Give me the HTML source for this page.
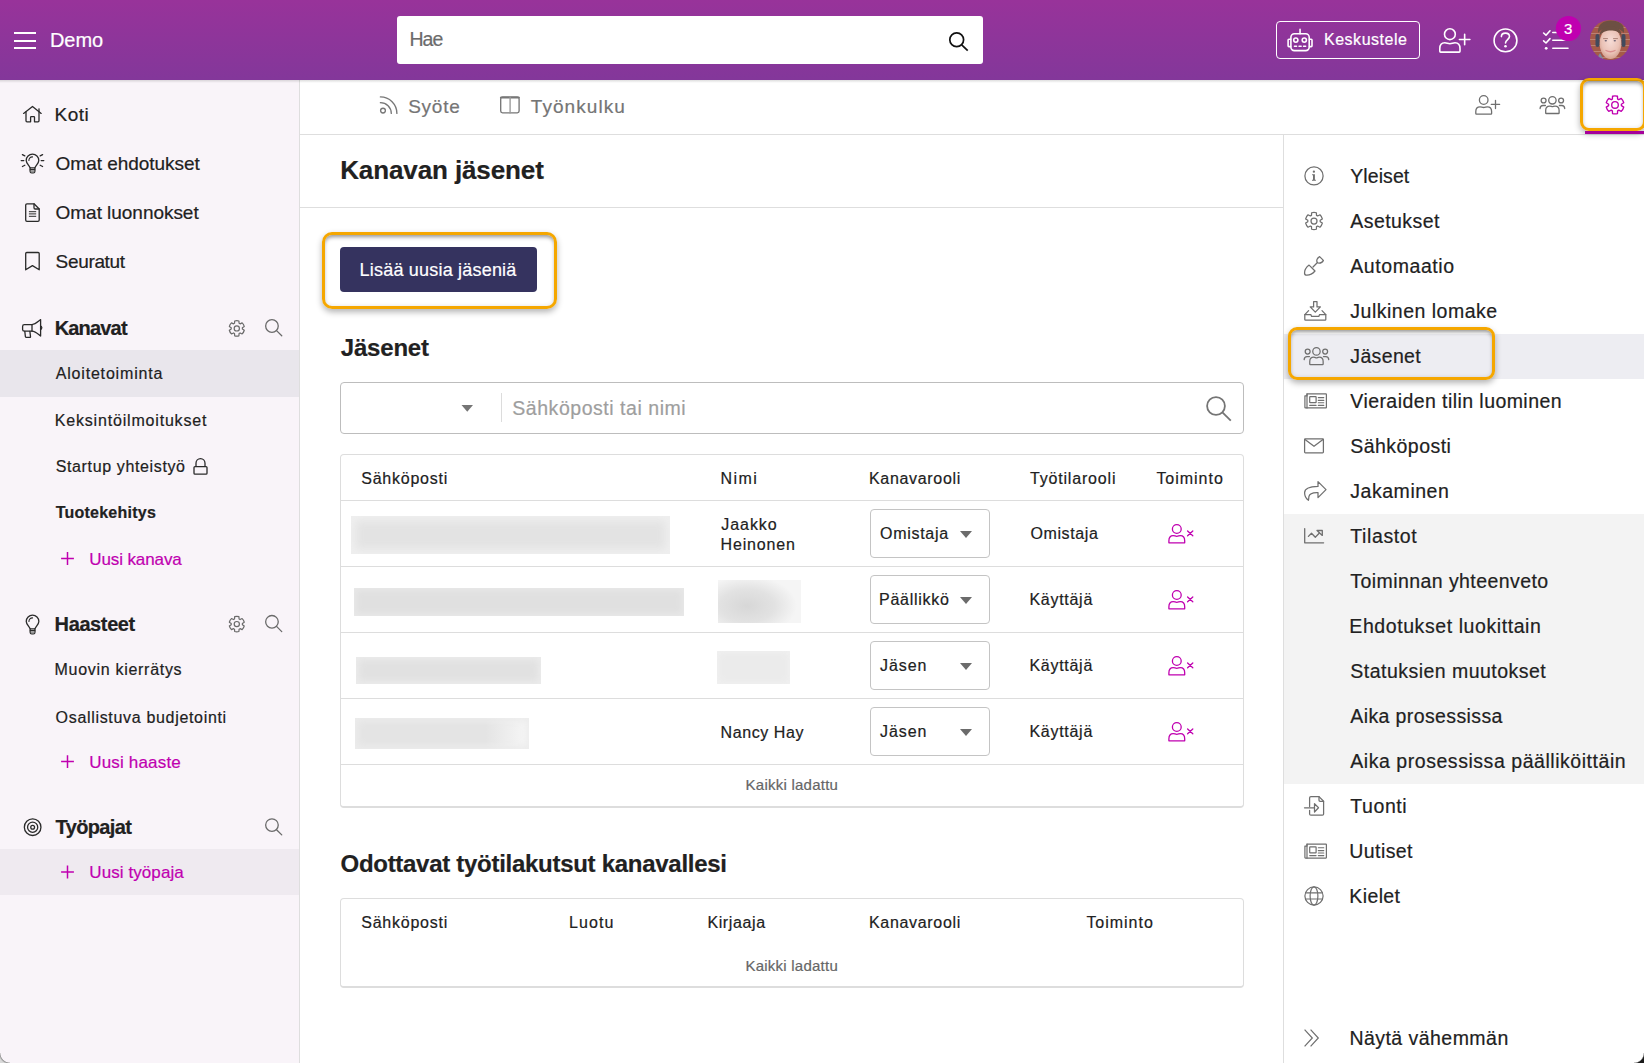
<!DOCTYPE html>
<html><head><meta charset="utf-8"><title>Kanavan jäsenet</title>
<style>
html,body{margin:0;padding:0;}
body{width:1644px;height:1063px;position:relative;overflow:hidden;background:#fff;font-family:"Liberation Sans", sans-serif;}
.t{position:absolute;line-height:1;white-space:nowrap;-webkit-text-stroke:0.2px currentColor;}
.a{position:absolute;box-sizing:border-box;}
svg.i{position:absolute;overflow:visible;}

</style></head><body>
<div class="a" style="left:0;top:0;width:1644px;height:80px;background:linear-gradient(180deg,#98339a 0%,#83379a 100%);"></div>
<!-- header -->

<div class="a" style="left:14px;top:32px;width:22px;height:2px;background:#fff"></div>
<div class="a" style="left:14px;top:39.5px;width:22px;height:2px;background:#fff"></div>
<div class="a" style="left:14px;top:47px;width:22px;height:2px;background:#fff"></div>
<div class="a" style="left:397px;top:16px;width:586px;height:48px;background:#fff;border-radius:3px"></div>
<svg class="i" style="left:0;top:0" width="1644" height="80">
  <circle cx="956.7" cy="39.8" r="6.9" fill="none" stroke="#111" stroke-width="1.7"/>
  <line x1="961.7" y1="44.8" x2="967.7" y2="50.6" stroke="#111" stroke-width="1.7"/>
</svg>
<div class="a" style="left:1276px;top:21px;width:144px;height:38px;border:1.3px solid #fff;border-radius:4px"></div>
<!-- tab bar -->
<div class="a" style="left:300px;top:134px;width:1344px;height:1px;background:#dedede"></div>
<!-- sidebar -->
<div class="a" style="left:0;top:80px;width:299px;height:983px;background:#f9f4f9"></div>
<div class="a" style="left:299px;top:80px;width:1px;height:983px;background:#dedede"></div>
<div class="a" style="left:0;top:350px;width:299px;height:47px;background:#e9e6ec"></div>
<div class="a" style="left:0;top:849px;width:299px;height:46px;background:#efeaf0"></div>
<!-- main -->
<div class="a" style="left:300px;top:207px;width:983px;height:1px;background:#dedede"></div>
<div class="a" style="left:322px;top:232px;width:235px;height:77px;border:3px solid #f5a700;border-radius:10px;box-shadow:0 3px 6px rgba(0,0,0,.3), inset 0 4px 4px -2px rgba(0,0,0,.38), inset 0 0 4px rgba(0,0,0,.12)"></div>
<div class="a" style="left:340px;top:247px;width:197px;height:45px;background:#35335f;border-radius:4px"></div>
<div class="a" style="left:340px;top:382px;width:904px;height:52px;border:1px solid #bdbdbd;border-radius:4px"></div>
<div class="a" style="left:501px;top:393px;width:1px;height:29px;background:#dcdcdc"></div>
<svg class="i" style="left:0;top:0" width="1644" height="1063">
  <path d="M461.5 405 L473 405 L467.25 411.8 Z" fill="#757575"/>
  <circle cx="1216" cy="406" r="8.9" fill="none" stroke="#757575" stroke-width="1.8"/>
  <line x1="1222.4" y1="412.4" x2="1230.8" y2="420.6" stroke="#757575" stroke-width="1.8"/>
</svg>
<div class="a" style="left:340px;top:454px;width:904px;height:354px;border:1px solid #dddddd;border-radius:4px;border-bottom-width:2px"></div>
<div class="a" style="left:341px;top:500px;width:902px;height:1px;background:#dddddd"></div>
<div class="a" style="left:341px;top:566px;width:902px;height:1px;background:#dddddd"></div>
<div class="a" style="left:341px;top:632px;width:902px;height:1px;background:#dddddd"></div>
<div class="a" style="left:341px;top:698px;width:902px;height:1px;background:#dddddd"></div>
<div class="a" style="left:341px;top:764px;width:902px;height:1px;background:#dddddd"></div>
<div class="a" style="left:340px;top:898px;width:904px;height:90px;border:1px solid #dddddd;border-radius:4px;border-bottom-width:2px"></div>
<!-- right panel -->
<div class="a" style="left:1283px;top:135px;width:1px;height:928px;background:#dedede"></div>
<div class="a" style="left:1284px;top:334px;width:360px;height:45px;background:#ededf2"></div>
<div class="a" style="left:1284px;top:514px;width:360px;height:270px;background:#f3f3f3"></div>
<!-- tab orange highlight -->
<div class="a" style="left:1580px;top:78px;width:66px;height:53px;border:3px solid #f5a700;border-radius:9px;box-shadow:0 3px 6px rgba(0,0,0,.3), inset 0 4px 4px -2px rgba(0,0,0,.38), inset 0 0 4px rgba(0,0,0,.12)"></div>
<div class="a" style="left:1585px;top:131px;width:59px;height:3px;background:#a5009a"></div>
<!-- dropdowns -->
<div class="a" style="left:870px;top:509px;width:120px;height:49px;border:1px solid #c4c4c4;border-radius:4px"></div>
<div class="a" style="left:870px;top:575px;width:120px;height:49px;border:1px solid #c4c4c4;border-radius:4px"></div>
<div class="a" style="left:870px;top:641px;width:120px;height:49px;border:1px solid #c4c4c4;border-radius:4px"></div>
<div class="a" style="left:870px;top:707px;width:120px;height:49px;border:1px solid #c4c4c4;border-radius:4px"></div>
<!-- blurred emails/names -->
<div class="a" style="left:351px;top:516px;width:319px;height:38px;background:#e3e3e3;box-shadow:inset 0 0 9px 5px #efefef"></div>
<div class="a" style="left:354px;top:588px;width:330px;height:28px;background:#e0e0e0;box-shadow:inset 0 0 6px 2px #e9e9e9"></div>
<div class="a" style="left:356px;top:657px;width:185px;height:27px;background:#e1e1e1;box-shadow:inset 0 0 7px 3px #ebebeb"></div>
<div class="a" style="left:355px;top:718px;width:174px;height:31px;background:linear-gradient(90deg,#e4e4e4 75%,#f7f7f7 100%);box-shadow:inset 0 0 7px 3px #ececec"></div>
<div class="a" style="left:718px;top:580px;width:83px;height:43px;background:radial-gradient(ellipse 60% 70% at 35% 60%,#d7d7d7 0%,#e2e2e2 55%,#f5f5f5 100%)"></div>
<div class="a" style="left:717px;top:651px;width:73px;height:33px;background:#ebebeb;box-shadow:inset 0 0 6px 2px #f0f0f0"></div>
<!-- right panel orange box -->
<div class="a" style="left:1288px;top:327px;width:207px;height:53px;border:3px solid #f5a700;border-radius:9px;box-shadow:0 3px 6px rgba(0,0,0,.3), inset 0 4px 4px -2px rgba(0,0,0,.38), inset 0 0 4px rgba(0,0,0,.12)"></div>

<div class="a" style="left:0;top:80px;width:1644px;height:3px;background:linear-gradient(180deg,rgba(0,0,0,.13),rgba(0,0,0,0))"></div>
<div class="a" style="left:1634px;top:1053px;width:10px;height:10px;background:radial-gradient(circle at 0 0,rgba(26,26,26,0) 9.2px,#1a1a1a 10.6px)"></div>
<div class="a" style="left:0;top:1053px;width:10px;height:10px;background:radial-gradient(circle at 10px 0,rgba(0,0,0,0) 9.2px,#9a9a9a 10px,#d9d9d9 11.5px)"></div>

<svg class="i" style="left:0;top:0" width="1644" height="1063" fill="none" stroke-linecap="round" stroke-linejoin="round">
<g stroke="#ffffff" stroke-width="1.6"><rect x="1290.9" y="33.8" width="18.3" height="16.8" rx="3.5"/><line x1="1300.05" y1="29.4" x2="1300.05" y2="33.8"/><path d="M1290.6 39.2 H1288.9 Q1288.1 39.2 1288.1 40 V45.8 Q1288.1 46.6 1288.9 46.6 H1290.6"/><path d="M1309.5 39.2 H1311.2 Q1312 39.2 1312 40 V45.8 Q1312 46.6 1311.2 46.6 H1309.5"/><circle cx="1295.8" cy="40.1" r="2.1"/><circle cx="1304.3" cy="40.1" r="2.1"/><path d="M1294.4 46.3 H1296.6 M1299 46.3 H1301.2 M1303.5 46.3 H1305.7" stroke-width="1.4"/></g>
<g stroke="#ffffff" stroke-width="1.6"><circle cx="1449.9" cy="34.2" r="5.4"/><path d="M1439.8 51.2 V48.6 C1439.8 45 1441.8 42.8 1444.8 42.8 C1446.8 42.8 1447.8 43.7 1449.9 43.7 C1452 43.7 1453 42.8 1455 42.8 C1458 42.8 1460 45 1460 48.6 V51.2 Q1460 52.1 1459.1 52.1 H1440.7 Q1439.8 52.1 1439.8 51.2 Z"/><path d="M1459.4 39.5 H1469.9 M1464.65 34.2 V44.8"/></g>
<g stroke="#ffffff" stroke-width="1.6"><circle cx="1505.5" cy="40.4" r="11.4"/><path d="M1501.4 36.6 C1501.4 34.3 1503.2 33.1 1505.4 33.1 C1507.8 33.1 1509.5 34.6 1509.5 36.6 C1509.5 39.2 1505.5 40 1505.5 43"/></g><circle cx="1505.5" cy="46.3" r="1.3" fill="#ffffff"/>
<g stroke="#ffffff" stroke-width="1.6"><path d="M1543.6 33 L1546 35.2 L1550 30.8"/><path d="M1543.6 40.8 L1546 43 L1550 38.6"/><path d="M1552.8 32.5 H1568 M1552.8 40.3 H1568 M1552.8 48.3 H1568"/></g><circle cx="1546.2" cy="48.3" r="1.4" fill="#ffffff"/>
<circle cx="1568.4" cy="28.5" r="12.6" fill="#c000b0"/>
<defs><clipPath id="av"><circle cx="1610" cy="40" r="20"/></clipPath><radialGradient id="face" cx="0.5" cy="0.42" r="0.62"><stop offset="0" stop-color="#f6dcd6"/><stop offset="0.65" stop-color="#eac2b6"/><stop offset="1" stop-color="#cf9a88"/></radialGradient></defs><g clip-path="url(#av)"><rect x="1590" y="20" width="40" height="40" fill="#a55a48"/><path d="M1590 27.5 H1630 M1590 33.5 H1630 M1590 39.5 H1630 M1590 45.5 H1630 M1590 51.5 H1630 M1590 57.5 H1630" stroke="#c99a8a" stroke-width="0.9" opacity="0.7"/><path d="M1598 33 C1597 24 1604 20.5 1611 20.5 C1619 20.5 1625 24 1624 33 C1622 30 1617 27.5 1611 27.5 C1604 27.5 1600 30 1598 33 Z" fill="#6d5043"/><rect x="1595.5" y="34" width="4" height="13" rx="2" fill="#424a5c"/><rect x="1621.5" y="34" width="4" height="13" rx="2" fill="#424a5c"/><ellipse cx="1610.5" cy="43.5" rx="10.8" ry="15.5" fill="url(#face)"/><path d="M1599.5 36 C1600 28 1606 26.5 1611 26.5 C1617 26.5 1621.5 29 1621.5 36 C1619 31.5 1615 30.5 1611 30.5 C1606 30.5 1602 32 1599.5 36 Z" fill="#6d5043"/><path d="M1603.5 38.6 H1607.5 M1613.5 38.6 H1617.5" stroke="#9a6f62" stroke-width="0.8"/><ellipse cx="1605.8" cy="40.8" rx="1.2" ry="0.7" fill="#6b5f70"/><ellipse cx="1614.8" cy="40.8" rx="1.2" ry="0.7" fill="#6b5f70"/><path d="M1606 50.5 Q1610.5 53 1615 50.5" stroke="#d98f8f" stroke-width="1.4"/><path d="M1596 60 L1600 53 L1604 60 Z" fill="#7d8aa0"/></g>
<g stroke="#777777" stroke-width="1.35"><circle cx="383" cy="110.6" r="2.4"/><path d="M380.4 102.7 A10.8 10.8 0 0 1 391.3 113.4"/><path d="M380.4 96.9 A16.5 16.5 0 0 1 396.9 113.4"/></g>
<g stroke="#777777" stroke-width="1.35"><rect x="500.7" y="96.9" width="18.4" height="16" rx="1.8"/><line x1="500.7" y1="97.6" x2="519.1" y2="97.6" stroke-width="1.6"/><line x1="510.1" y1="97" x2="510.1" y2="112.9" stroke="#999"/></g>
<g stroke="#6f6f6f" stroke-width="1.3"><circle cx="1483.7" cy="100" r="4.3"/><path d="M1475.8 113.6 V111.6 C1475.8 108.6 1477.5 106.8 1480 106.8 C1481.6 106.8 1482.2 107.5 1483.7 107.5 C1485.2 107.5 1485.8 106.8 1487.4 106.8 C1489.9 106.8 1491.6 108.6 1491.6 111.6 V113.6 Q1491.6 114.2 1491 114.2 H1476.4 Q1475.8 114.2 1475.8 113.6 Z"/><path d="M1491.3 104.4 H1499.6 M1495.5 100.3 V108.5"/></g>
<g stroke="#6f6f6f" stroke-width="1.3"><circle cx="1552.4" cy="100.3" r="3.7"/><circle cx="1543.6000000000001" cy="100.5" r="2.45"/><circle cx="1561.1000000000001" cy="100.5" r="2.45"/><path d="M1545.7 112.89999999999999 V110.3 C1545.7 107.6 1547.4 106.1 1549.7 106.1 C1551.1000000000001 106.1 1551.5 106.7 1552.4 106.7 C1553.3000000000002 106.7 1553.7 106.1 1555.1000000000001 106.1 C1557.4 106.1 1559.1000000000001 107.6 1559.1000000000001 110.3 V112.89999999999999 Q1559.1000000000001 113.5 1558.5 113.5 H1546.3000000000002 Q1545.7 113.5 1545.7 112.89999999999999 Z"/><path d="M1545.4 105.5 H1543.0 C1541.2 105.5 1540.2 106.89999999999999 1540.1000000000001 108.5"/><path d="M1559.4 105.5 H1561.8000000000002 C1563.6000000000001 105.5 1564.6000000000001 106.89999999999999 1564.7 108.5"/></g>
<path d="M1617.60 99.05 L1617.48 96.25 A9.0 9.0 0 0 0 1612.52 96.25 L1612.40 99.05 A6.4 6.4 0 0 0 1611.24 99.72 L1608.75 98.43 A9.0 9.0 0 0 0 1606.27 102.72 L1608.64 104.23 A6.4 6.4 0 0 0 1608.64 105.57 L1606.27 107.08 A9.0 9.0 0 0 0 1608.75 111.37 L1611.24 110.08 A6.4 6.4 0 0 0 1612.40 110.75 L1612.52 113.55 A9.0 9.0 0 0 0 1617.48 113.55 L1617.60 110.75 A6.4 6.4 0 0 0 1618.76 110.08 L1621.25 111.37 A9.0 9.0 0 0 0 1623.73 107.08 L1621.36 105.57 A6.4 6.4 0 0 0 1621.36 104.23 L1623.73 102.72 A9.0 9.0 0 0 0 1621.25 98.43 L1618.76 99.72 A6.4 6.4 0 0 0 1617.60 99.05 Z" stroke="#c000b0" stroke-width="1.35"/>
<circle cx="1615" cy="104.9" r="3.3" stroke="#c000b0" stroke-width="1.35"/>
<g stroke="#2a2a2a" stroke-width="1.3"><path d="M23.6 113.4 L32.5 106.4 L41.2 113.4"/><path d="M39 108.8 V111.3"/><path d="M26 111.8 V120.8 Q26 121.8 27 121.8 H30.6 V117.3 Q30.6 116.6 31.3 116.6 H33.8 Q34.5 116.6 34.5 117.3 V121.8 H38 Q39 121.8 39 120.8 V111.8"/></g>
<g stroke="#2a2a2a" stroke-width="1.3"><path d="M30.1 167.9 C29.5 165.8 26.2 163.3 26.2 160.5 A6.2 6.2 0 0 1 38.8 160.5 C38.8 163.3 35.5 165.8 34.9 167.9 Z"/><path d="M30.1 167.9 V171.3 Q30.1 172.9 31.7 172.9 H33.3 Q34.9 172.9 34.9 171.3 V167.9"/><line x1="30.3" y1="169.70000000000002" x2="34.7" y2="169.70000000000002"/><rect x="30.8" y="170.20000000000002" width="3.4" height="2.2" fill="#999" stroke="none"/><path d="M28.9 160.5 A3.4 3.4 0 0 1 32.5 156.9" stroke-width="1.1"/><path d="M22.4 154.60000000000002 L24.8 155.9 M21.2 160.60000000000002 H23.8 M22.4 166.5 L24.8 165.20000000000002 M42.6 154.60000000000002 L40.2 155.9 M43.8 160.60000000000002 H41.2 M42.6 166.5 L40.2 165.20000000000002"/></g>
<g stroke="#2a2a2a" stroke-width="1.3"><path d="M30.15 628.9 C29.549999999999997 626.8 26.249999999999996 624.3 26.249999999999996 621.5 A6.2 6.2 0 0 1 38.849999999999994 621.5 C38.849999999999994 624.3 35.55 626.8 34.949999999999996 628.9 Z"/><path d="M30.15 628.9 V632.3 Q30.15 633.9 31.749999999999996 633.9 H33.349999999999994 Q34.949999999999996 633.9 34.949999999999996 632.3 V628.9"/><line x1="30.349999999999998" y1="630.6999999999999" x2="34.75" y2="630.6999999999999"/><rect x="30.849999999999998" y="631.1999999999999" width="3.4" height="2.2" fill="#999" stroke="none"/><path d="M28.949999999999996 621.5 A3.4 3.4 0 0 1 32.55 617.9" stroke-width="1.1"/></g>
<g stroke="#2a2a2a" stroke-width="1.3"><path d="M34 203.8 H27 Q25.7 203.8 25.7 205.1 V220 Q25.7 221.3 27 221.3 H37.9 Q39.2 221.3 39.2 220 V209 L34 203.8 Z"/><path d="M34 203.8 V207.8 Q34 209 35.2 209 H39.2"/><path d="M29.3 211.7 H35.8 M29.3 213.9 H35.8 M29.3 216.3 H35.8" stroke-width="1"/></g>
<path d="M25.7 269.8 V253.6 Q25.7 252.5 26.8 252.5 H38.1 Q39.2 252.5 39.2 253.6 V269.8 L32.45 265.6 Z" stroke="#2a2a2a" stroke-width="1.3"/>
<g stroke="#2a2a2a" stroke-width="1.3"><path d="M32 324.6 H24.4 Q22.6 324.6 22.6 326.4 V329.4 Q22.6 331.2 24.4 331.2 H32 Z"/><path d="M32 324.6 C35.5 324.4 37.5 322 40.6 319.6 V336 C37.5 333.6 35.5 331.4 32 331.2"/><path d="M24.8 331.4 L25.4 336.6 Q25.6 337.4 26.4 337.4 H29.8 Q30.6 337.4 30.5 336.6 L29.9 331.4"/><path d="M41.3 326.4 Q42.4 327.7 41.3 329"/></g>
<path d="M239.08 323.28 L238.92 321.00 A7.7 7.7 0 0 0 234.68 321.00 L234.52 323.28 A5.6 5.6 0 0 0 233.51 323.87 L231.45 322.86 A7.7 7.7 0 0 0 229.33 326.54 L231.23 327.81 A5.6 5.6 0 0 0 231.23 328.99 L229.33 330.26 A7.7 7.7 0 0 0 231.45 333.94 L233.51 332.93 A5.6 5.6 0 0 0 234.52 333.52 L234.68 335.80 A7.7 7.7 0 0 0 238.92 335.80 L239.08 333.52 A5.6 5.6 0 0 0 240.09 332.93 L242.15 333.94 A7.7 7.7 0 0 0 244.27 330.26 L242.37 328.99 A5.6 5.6 0 0 0 242.37 327.81 L244.27 326.54 A7.7 7.7 0 0 0 242.15 322.86 L240.09 323.87 A5.6 5.6 0 0 0 239.08 323.28 Z" stroke="#6a6a6a" stroke-width="1.2"/>
<circle cx="236.8" cy="328.4" r="2.6" stroke="#6a6a6a" stroke-width="1.2"/>
<path d="M239.08 618.98 L238.92 616.70 A7.7 7.7 0 0 0 234.68 616.70 L234.52 618.98 A5.6 5.6 0 0 0 233.51 619.57 L231.45 618.56 A7.7 7.7 0 0 0 229.33 622.24 L231.23 623.51 A5.6 5.6 0 0 0 231.23 624.69 L229.33 625.96 A7.7 7.7 0 0 0 231.45 629.64 L233.51 628.63 A5.6 5.6 0 0 0 234.52 629.22 L234.68 631.50 A7.7 7.7 0 0 0 238.92 631.50 L239.08 629.22 A5.6 5.6 0 0 0 240.09 628.63 L242.15 629.64 A7.7 7.7 0 0 0 244.27 625.96 L242.37 624.69 A5.6 5.6 0 0 0 242.37 623.51 L244.27 622.24 A7.7 7.7 0 0 0 242.15 618.56 L240.09 619.57 A5.6 5.6 0 0 0 239.08 618.98 Z" stroke="#6a6a6a" stroke-width="1.2"/>
<circle cx="236.8" cy="624.1" r="2.6" stroke="#6a6a6a" stroke-width="1.2"/>
<circle cx="271.95" cy="326" r="6.3" stroke="#6a6a6a" stroke-width="1.3"/>
<line x1="276.55" y1="330.6" x2="281.75" y2="335.8" stroke="#6a6a6a" stroke-width="1.3"/>
<circle cx="271.95" cy="621.8" r="6.3" stroke="#6a6a6a" stroke-width="1.3"/>
<line x1="276.55" y1="626.4" x2="281.75" y2="631.5999999999999" stroke="#6a6a6a" stroke-width="1.3"/>
<circle cx="271.95" cy="825.1" r="6.3" stroke="#6a6a6a" stroke-width="1.3"/>
<line x1="276.55" y1="829.7" x2="281.75" y2="834.9" stroke="#6a6a6a" stroke-width="1.3"/>
<g stroke="#2a2a2a" stroke-width="1.3"><path d="M196 466 V463.2 A4.5 4.5 0 0 1 205 463.2 V466"/><rect x="194" y="466.6" width="13" height="7.6" rx="1"/></g>
<path d="M61.1 558.5 H73.9 M67.5 552.1 V564.9" stroke="#c000b0" stroke-width="1.5" stroke-linecap="butt"/>
<path d="M61.1 761.6 H73.9 M67.5 755.2 V768.0" stroke="#c000b0" stroke-width="1.5" stroke-linecap="butt"/>
<path d="M61.1 872.0 H73.9 M67.5 865.6 V878.4" stroke="#c000b0" stroke-width="1.5" stroke-linecap="butt"/>
<g stroke="#2a2a2a" stroke-width="1.3"><circle cx="32.65" cy="827.2" r="8.3"/><circle cx="32.65" cy="827.2" r="5.1"/><circle cx="32.65" cy="827.2" r="1.9"/></g>
<g stroke="#c000b0" stroke-width="1.3"><circle cx="1176.8" cy="529" r="4.4"/><path d="M1168.9 542.8 V540.8 C1168.9 537.8 1170.5 535.6 1173.2 535.6 C1174.7 535.6 1175.3 536.3 1176.8 536.3 C1178.3 536.3 1178.9 535.6 1180.4 535.6 C1183.1 535.6 1184.7 537.8 1184.7 540.8 V542.8 Z"/><path d="M1187.6 530.9 L1192.8 535.7 M1192.8 530.9 L1187.6 535.7"/></g>
<path d="M960 531 H972 L966 538 Z" fill="#6b6b6b"/>
<g stroke="#c000b0" stroke-width="1.3"><circle cx="1176.8" cy="595" r="4.4"/><path d="M1168.9 608.8 V606.8 C1168.9 603.8 1170.5 601.6 1173.2 601.6 C1174.7 601.6 1175.3 602.3 1176.8 602.3 C1178.3 602.3 1178.9 601.6 1180.4 601.6 C1183.1 601.6 1184.7 603.8 1184.7 606.8 V608.8 Z"/><path d="M1187.6 596.9 L1192.8 601.7 M1192.8 596.9 L1187.6 601.7"/></g>
<path d="M960 597 H972 L966 604 Z" fill="#6b6b6b"/>
<g stroke="#c000b0" stroke-width="1.3"><circle cx="1176.8" cy="661" r="4.4"/><path d="M1168.9 674.8 V672.8 C1168.9 669.8 1170.5 667.6 1173.2 667.6 C1174.7 667.6 1175.3 668.3 1176.8 668.3 C1178.3 668.3 1178.9 667.6 1180.4 667.6 C1183.1 667.6 1184.7 669.8 1184.7 672.8 V674.8 Z"/><path d="M1187.6 662.9 L1192.8 667.7 M1192.8 662.9 L1187.6 667.7"/></g>
<path d="M960 663 H972 L966 670 Z" fill="#6b6b6b"/>
<g stroke="#c000b0" stroke-width="1.3"><circle cx="1176.8" cy="727" r="4.4"/><path d="M1168.9 740.8 V738.8 C1168.9 735.8 1170.5 733.6 1173.2 733.6 C1174.7 733.6 1175.3 734.3 1176.8 734.3 C1178.3 734.3 1178.9 733.6 1180.4 733.6 C1183.1 733.6 1184.7 735.8 1184.7 738.8 V740.8 Z"/><path d="M1187.6 728.9 L1192.8 733.7 M1192.8 728.9 L1187.6 733.7"/></g>
<path d="M960 729 H972 L966 736 Z" fill="#6b6b6b"/>
<g stroke="#6f6f6f" stroke-width="1.25"><circle cx="1314" cy="175.9" r="9.1"/></g><g fill="#6f6f6f"><circle cx="1313.9" cy="171.7" r="1.15"/><path d="M1312.1 174.2 H1314.9 V179.8 H1315.9 V180.8 H1312 V179.8 H1313 V175.2 H1312.1 Z"/></g>
<path d="M1316.52 215.34 L1316.37 212.73 A8.6 8.6 0 0 0 1311.63 212.73 L1311.48 215.34 A6.2 6.2 0 0 0 1310.36 215.98 L1308.03 214.81 A8.6 8.6 0 0 0 1305.66 218.92 L1307.83 220.35 A6.2 6.2 0 0 0 1307.83 221.65 L1305.66 223.08 A8.6 8.6 0 0 0 1308.03 227.19 L1310.36 226.02 A6.2 6.2 0 0 0 1311.48 226.66 L1311.63 229.27 A8.6 8.6 0 0 0 1316.37 229.27 L1316.52 226.66 A6.2 6.2 0 0 0 1317.64 226.02 L1319.97 227.19 A8.6 8.6 0 0 0 1322.34 223.08 L1320.17 221.65 A6.2 6.2 0 0 0 1320.17 220.35 L1322.34 218.92 A8.6 8.6 0 0 0 1319.97 214.81 L1317.64 215.98 A6.2 6.2 0 0 0 1316.52 215.34 Z" stroke="#6f6f6f" stroke-width="1.25"/>
<circle cx="1314" cy="221" r="3" stroke="#6f6f6f" stroke-width="1.25"/>
<g stroke="#6f6f6f" stroke-width="1.25"><path d="M1319.6 256.6 L1323.4 260.4 Q1322 263.2 1319.2 263.2 Q1316.5 263 1316.8 260 Q1317.2 258 1319.6 256.6 Z"/><line x1="1317.2" y1="262.8" x2="1313" y2="267"/><path d="M1309.1 265.1 L1315 271 Q1311 275.6 1306 275.1 Q1304.3 274.8 1304.6 272.2 Q1304.8 268.5 1309.1 265.1 Z"/></g>
<g stroke="#6f6f6f" stroke-width="1.25"><path d="M1313.6 301.7 H1317 V306.9 H1320.4 L1315.3 312.1 L1310.2 306.9 H1313.6 Z"/><path d="M1308.6 310.6 L1304.8 314.6 V319.4 Q1304.8 320.2 1305.6 320.2 H1325 Q1325.8 320.2 1325.8 319.4 V314.6 L1322 310.6"/><path d="M1304.8 314.6 H1310.8 L1311.6 316.4 H1318.8 L1319.6 314.6 H1325.8"/></g>
<g stroke="#6f6f6f" stroke-width="1.25"><circle cx="1316.45" cy="351.4" r="3.7"/><circle cx="1307.65" cy="351.59999999999997" r="2.45"/><circle cx="1325.15" cy="351.59999999999997" r="2.45"/><path d="M1309.75 364.0 V361.4 C1309.75 358.7 1311.45 357.2 1313.75 357.2 C1315.15 357.2 1315.55 357.79999999999995 1316.45 357.79999999999995 C1317.3500000000001 357.79999999999995 1317.75 357.2 1319.15 357.2 C1321.45 357.2 1323.15 358.7 1323.15 361.4 V364.0 Q1323.15 364.59999999999997 1322.55 364.59999999999997 H1310.3500000000001 Q1309.75 364.59999999999997 1309.75 364.0 Z"/><path d="M1309.45 356.59999999999997 H1307.05 C1305.25 356.59999999999997 1304.25 358.0 1304.15 359.59999999999997"/><path d="M1323.45 356.59999999999997 H1325.8500000000001 C1327.65 356.59999999999997 1328.65 358.0 1328.75 359.59999999999997"/></g>
<g stroke="#6f6f6f" stroke-width="1.2"><path d="M1307.0 393.90000000000003 H1325.8999999999999 Q1326.3999999999999 393.90000000000003 1326.3999999999999 394.40000000000003 V407.40000000000003 Q1326.3999999999999 407.90000000000003 1325.8999999999999 407.90000000000003 H1305.3999999999999 Q1304.8999999999999 407.90000000000003 1304.8999999999999 407.40000000000003 V395.90000000000003 H1307.0 Z"/><path d="M1307.0 393.90000000000003 V407.90000000000003"/><rect x="1309.7" y="396.7" width="6.4" height="6" rx="0.4"/><path d="M1318.3 397.6 H1323.8 M1318.3 400.40000000000003 H1323.8 M1318.3 402.8 H1323.8 M1309.7 405.40000000000003 H1316.1 M1318.3 405.40000000000003 H1323.8" stroke-width="1.1"/></g>
<g stroke="#6f6f6f" stroke-width="1.2"><path d="M1307.0 844.1 H1325.8999999999999 Q1326.3999999999999 844.1 1326.3999999999999 844.6 V857.6 Q1326.3999999999999 858.1 1325.8999999999999 858.1 H1305.3999999999999 Q1304.8999999999999 858.1 1304.8999999999999 857.6 V846.1 H1307.0 Z"/><path d="M1307.0 844.1 V858.1"/><rect x="1309.7" y="846.9" width="6.4" height="6" rx="0.4"/><path d="M1318.3 847.8 H1323.8 M1318.3 850.6 H1323.8 M1318.3 853.0 H1323.8 M1309.7 855.6 H1316.1 M1318.3 855.6 H1323.8" stroke-width="1.1"/></g>
<g stroke="#6f6f6f" stroke-width="1.25"><rect x="1304.6" y="438.9" width="18.8" height="14" rx="0.8"/><path d="M1305 439.5 L1314 446.3 L1323 439.5"/></g>
<path d="M1318 481.6 L1326 489.6 L1318 497.6 V492.6 C1313 492.4 1309.4 493.6 1308.9 496.6 C1308.7 498 1308.8 499.3 1308.4 500.3 C1305.8 498.4 1304.6 495.3 1304.6 492.8 C1304.6 488.6 1308.6 486.6 1318 486.4 Z" stroke="#6f6f6f" stroke-width="1.25"/>
<g stroke="#6f6f6f" stroke-width="1.3"><path d="M1304.7 528.6 V542.8 H1323.6"/><path d="M1308.4 536.4 L1311.5 533.2 L1315.3 537.2 L1319.4 533"/><path d="M1317 530.5 H1322.3 V535.4 Z"/></g>
<g stroke="#6f6f6f" stroke-width="1.25"><path d="M1309.6 806.6 V797.9 Q1309.6 796.6 1310.9 796.6 H1319 L1323.6 801.3 V814 Q1323.6 815.2 1322.4 815.2 H1310.9 Q1309.6 815.2 1309.6 814 V810.3"/><path d="M1319 796.6 V800.2 Q1319 801.3 1320.1 801.3 H1323.6"/><path d="M1304.5 807.8 H1314.2"/><path d="M1314.5 803.6 L1318.5 807.8 L1314.5 812 Z"/></g>
<g stroke="#6f6f6f" stroke-width="1.2"><circle cx="1314" cy="896" r="9.1"/><ellipse cx="1314" cy="896" rx="3.9" ry="9.1"/><path d="M1305.6 892.8 H1322.4 M1305.6 899 H1322.4"/></g>
<path d="M1304.6 1029.6 L1312.3 1038 L1304.6 1046.4 M1310.6 1029.6 L1318.3 1038 L1310.6 1046.4" stroke="#6f6f6f" stroke-width="1.2" stroke-linecap="butt" stroke-linejoin="miter"/>
</svg>
<div class="t" style="left:50.00px;top:29.90px;font-size:20px;color:#ffffff;letter-spacing:-0.076px;">Demo</div>
<div class="t" style="left:409.40px;top:30.00px;font-size:19.5px;color:#6b6b6b;letter-spacing:-0.964px;">Hae</div>
<div class="t" style="left:1324.00px;top:31.70px;font-size:16px;color:#ffffff;letter-spacing:0.515px;">Keskustele</div>
<div class="t" style="left:1564.00px;top:21.00px;font-size:15px;color:#ffffff;">3</div>
<div class="t" style="left:408.20px;top:96.60px;font-size:19px;color:#757575;letter-spacing:0.745px;">Syöte</div>
<div class="t" style="left:530.80px;top:96.60px;font-size:19px;color:#757575;letter-spacing:1.065px;">Työnkulku</div>
<div class="t" style="left:54.60px;top:105.10px;font-size:19px;color:#212121;letter-spacing:0.494px;">Koti</div>
<div class="t" style="left:55.60px;top:153.80px;font-size:19px;color:#212121;letter-spacing:-0.029px;">Omat ehdotukset</div>
<div class="t" style="left:55.60px;top:202.90px;font-size:19px;color:#212121;letter-spacing:-0.040px;">Omat luonnokset</div>
<div class="t" style="left:55.60px;top:251.80px;font-size:19px;color:#212121;letter-spacing:-0.335px;">Seuratut</div>
<div class="t" style="left:54.70px;top:318.00px;font-size:20px;color:#212121;font-weight:700;letter-spacing:-0.825px;">Kanavat</div>
<div class="t" style="left:55.70px;top:365.70px;font-size:16px;color:#212121;letter-spacing:0.819px;">Aloitetoiminta</div>
<div class="t" style="left:54.70px;top:413.00px;font-size:16px;color:#212121;letter-spacing:0.822px;">Keksintöilmoitukset</div>
<div class="t" style="left:55.70px;top:459.00px;font-size:16px;color:#212121;letter-spacing:0.633px;">Startup yhteistyö</div>
<div class="t" style="left:55.70px;top:504.70px;font-size:16px;color:#212121;font-weight:700;letter-spacing:0.236px;">Tuotekehitys</div>
<div class="t" style="left:89.30px;top:551.00px;font-size:17px;color:#c000b0;letter-spacing:-0.110px;">Uusi kanava</div>
<div class="t" style="left:54.60px;top:614.00px;font-size:20px;color:#212121;font-weight:700;letter-spacing:-0.388px;">Haasteet</div>
<div class="t" style="left:54.60px;top:662.40px;font-size:16px;color:#212121;letter-spacing:0.702px;">Muovin kierrätys</div>
<div class="t" style="left:55.60px;top:709.60px;font-size:16px;color:#212121;letter-spacing:0.678px;">Osallistuva budjetointi</div>
<div class="t" style="left:89.30px;top:754.00px;font-size:17px;color:#c000b0;letter-spacing:0.168px;">Uusi haaste</div>
<div class="t" style="left:55.60px;top:816.90px;font-size:20px;color:#212121;font-weight:700;letter-spacing:-0.642px;">Työpajat</div>
<div class="t" style="left:89.30px;top:864.40px;font-size:17px;color:#c000b0;letter-spacing:0.082px;">Uusi työpaja</div>
<div class="t" style="left:340.20px;top:157.30px;font-size:26px;color:#212121;font-weight:700;letter-spacing:-0.111px;">Kanavan jäsenet</div>
<div class="t" style="left:359.60px;top:260.60px;font-size:18px;color:#ffffff;letter-spacing:0.200px;">Lisää uusia jäseniä</div>
<div class="t" style="left:340.80px;top:336.00px;font-size:24px;color:#212121;font-weight:700;letter-spacing:-0.200px;">Jäsenet</div>
<div class="t" style="left:512.30px;top:398.50px;font-size:19.5px;color:#9e9e9e;letter-spacing:0.537px;">Sähköposti tai nimi</div>
<div class="t" style="left:361.20px;top:471.00px;font-size:16px;color:#212121;letter-spacing:0.766px;">Sähköposti</div>
<div class="t" style="left:720.50px;top:471.00px;font-size:16px;color:#212121;letter-spacing:1.421px;">Nimi</div>
<div class="t" style="left:869.00px;top:471.00px;font-size:16px;color:#212121;letter-spacing:0.675px;">Kanavarooli</div>
<div class="t" style="left:1030.00px;top:471.00px;font-size:16px;color:#212121;letter-spacing:0.816px;">Työtilarooli</div>
<div class="t" style="left:1156.40px;top:471.00px;font-size:16px;color:#212121;letter-spacing:0.974px;">Toiminto</div>
<div class="t" style="left:721.30px;top:516.50px;font-size:16px;color:#212121;letter-spacing:0.941px;">Jaakko</div>
<div class="t" style="left:720.50px;top:536.50px;font-size:16px;color:#212121;letter-spacing:0.843px;">Heinonen</div>
<div class="t" style="left:720.60px;top:725.00px;font-size:16px;color:#212121;letter-spacing:0.569px;">Nancy Hay</div>
<div class="t" style="left:880.00px;top:526.30px;font-size:16px;color:#212121;letter-spacing:0.710px;">Omistaja</div>
<div class="t" style="left:1030.40px;top:526.40px;font-size:16px;color:#212121;letter-spacing:0.610px;">Omistaja</div>
<div class="t" style="left:879.00px;top:592.30px;font-size:16px;color:#212121;letter-spacing:0.733px;">Päällikkö</div>
<div class="t" style="left:1029.40px;top:592.40px;font-size:16px;color:#212121;letter-spacing:0.727px;">Käyttäjä</div>
<div class="t" style="left:880.00px;top:658.30px;font-size:16px;color:#212121;letter-spacing:0.926px;">Jäsen</div>
<div class="t" style="left:1029.40px;top:658.40px;font-size:16px;color:#212121;letter-spacing:0.727px;">Käyttäjä</div>
<div class="t" style="left:880.00px;top:724.30px;font-size:16px;color:#212121;letter-spacing:0.926px;">Jäsen</div>
<div class="t" style="left:1029.40px;top:724.40px;font-size:16px;color:#212121;letter-spacing:0.727px;">Käyttäjä</div>
<div class="t" style="left:745.60px;top:777.00px;font-size:15px;color:#666666;letter-spacing:0.240px;">Kaikki ladattu</div>
<div class="t" style="left:340.50px;top:852.00px;font-size:24px;color:#212121;font-weight:700;letter-spacing:-0.284px;">Odottavat työtilakutsut kanavallesi</div>
<div class="t" style="left:361.20px;top:915.20px;font-size:16px;color:#212121;letter-spacing:0.766px;">Sähköposti</div>
<div class="t" style="left:569.10px;top:915.20px;font-size:16px;color:#212121;letter-spacing:1.065px;">Luotu</div>
<div class="t" style="left:707.40px;top:915.20px;font-size:16px;color:#212121;letter-spacing:0.620px;">Kirjaaja</div>
<div class="t" style="left:869.00px;top:915.20px;font-size:16px;color:#212121;letter-spacing:0.675px;">Kanavarooli</div>
<div class="t" style="left:1086.40px;top:915.20px;font-size:16px;color:#212121;letter-spacing:0.974px;">Toiminto</div>
<div class="t" style="left:745.40px;top:958.30px;font-size:15px;color:#666666;letter-spacing:0.240px;">Kaikki ladattu</div>
<div class="t" style="left:1350.30px;top:166.50px;font-size:19.5px;color:#212121;letter-spacing:0.065px;">Yleiset</div>
<div class="t" style="left:1350.30px;top:211.50px;font-size:19.5px;color:#212121;letter-spacing:0.436px;">Asetukset</div>
<div class="t" style="left:1350.30px;top:256.50px;font-size:19.5px;color:#212121;letter-spacing:0.567px;">Automaatio</div>
<div class="t" style="left:1350.30px;top:301.50px;font-size:19.5px;color:#212121;letter-spacing:0.502px;">Julkinen lomake</div>
<div class="t" style="left:1350.30px;top:346.50px;font-size:19.5px;color:#212121;letter-spacing:0.353px;">Jäsenet</div>
<div class="t" style="left:1350.30px;top:391.50px;font-size:19.5px;color:#212121;letter-spacing:0.434px;">Vieraiden tilin luominen</div>
<div class="t" style="left:1350.30px;top:436.50px;font-size:19.5px;color:#212121;letter-spacing:0.450px;">Sähköposti</div>
<div class="t" style="left:1350.30px;top:481.50px;font-size:19.5px;color:#212121;letter-spacing:0.531px;">Jakaminen</div>
<div class="t" style="left:1350.30px;top:526.50px;font-size:19.5px;color:#212121;letter-spacing:0.613px;">Tilastot</div>
<div class="t" style="left:1350.30px;top:571.50px;font-size:19.5px;color:#212121;letter-spacing:0.428px;">Toiminnan yhteenveto</div>
<div class="t" style="left:1349.30px;top:616.50px;font-size:19.5px;color:#212121;letter-spacing:0.580px;">Ehdotukset luokittain</div>
<div class="t" style="left:1350.30px;top:661.50px;font-size:19.5px;color:#212121;letter-spacing:0.473px;">Statuksien muutokset</div>
<div class="t" style="left:1350.30px;top:706.50px;font-size:19.5px;color:#212121;letter-spacing:0.389px;">Aika prosessissa</div>
<div class="t" style="left:1350.30px;top:751.50px;font-size:19.5px;color:#212121;letter-spacing:0.543px;">Aika prosessissa päälliköittäin</div>
<div class="t" style="left:1350.30px;top:796.50px;font-size:19.5px;color:#212121;letter-spacing:0.572px;">Tuonti</div>
<div class="t" style="left:1349.30px;top:841.50px;font-size:19.5px;color:#212121;letter-spacing:0.421px;">Uutiset</div>
<div class="t" style="left:1349.30px;top:886.50px;font-size:19.5px;color:#212121;letter-spacing:0.388px;">Kielet</div>
<div class="t" style="left:1349.40px;top:1029.00px;font-size:19.5px;color:#212121;letter-spacing:0.463px;">Näytä vähemmän</div>
</body></html>
